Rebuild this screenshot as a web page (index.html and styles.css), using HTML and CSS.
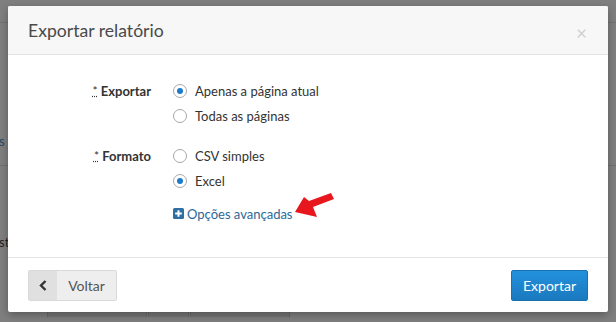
FILE: index.html
```html
<!DOCTYPE html>
<html lang="pt">
    <head>
        <meta charset="UTF-8">
        <title>Exportar relatório</title>
        <link rel="stylesheet" href="styles.css">
    </head>
    <body>
        <div class="page">
            <div class="topbar"></div>
            <div class="stub link">s</div>
            <div class="rule"></div>
            <div class="stub text">st</div>
            <div class="tabs">
                <span></span><span class="small"></span><span></span>
            </div>
        </div>

        <div class="overlay">
            <div class="modal">
                <div class="modal-header">
                    <h4>Exportar relatório</h4>
                    <span class="close">&times;</span>
                </div>
                <div class="modal-body">
                    <div class="group">
                        <label class="name"><abbr>*</abbr> Exportar</label>
                        <div class="options">
                            <label class="radio"><span class="dot checked"></span>Apenas a página atual</label>
                            <label class="radio"><span class="dot"></span>Todas as páginas</label>
                        </div>
                    </div>
                    <div class="group">
                        <label class="name"><abbr>*</abbr> Formato</label>
                        <div class="options">
                            <label class="radio"><span class="dot"></span>CSV simples</label>
                            <label class="radio"><span class="dot checked"></span>Excel</label>
                            <a class="advanced">
                                <svg width="11" height="11" viewBox="0 0 11 11">
                                    <rect width="11" height="11" rx="1.5" fill="#2f6fa3"/>
                                    <path d="M5.5 2.2v6.6M2.2 5.5h6.6" stroke="#fff" stroke-width="2"/>
                                </svg>Opções avançadas
                                <svg class="arrow" width="50" height="32" viewBox="0 0 50 32">
                                    <polygon points="5,24 14,9 19,13 41,5 44,11 23,19 27,29" fill="#e8171d"/>
                                </svg>
                            </a>
                        </div>
                    </div>
                </div>
                <div class="modal-footer">
                    <button class="back"><span class="chev">
                        <svg width="8" height="11" viewBox="0 0 8 11"><path d="M6.5 1L2 5.5 6.5 10" fill="none" stroke="#333" stroke-width="2.4"/></svg>
                    </span><span class="label">Voltar</span></button>
                    <button class="primary">Exportar</button>
                </div>
            </div>
        </div>
    </body>
</html>
```

FILE: styles.css
```css
body {
    margin: 0;
    background: #7f7f7f;
    font-family: Lato, "Open Sans", sans-serif;
    color: #333;
    height: 322px;
    overflow: hidden;
}

.page {
    width: 616px;
    height: 322px;
    position: relative;

    .topbar {
        height: 22px;
        border-bottom: 1px solid #707070;
    }

    .stub {
        font-size: 13px;
        margin-left: -1px;
    }

    .link {
        margin-top: 110px;
        color: #244a66;
    }

    .rule {
        margin-top: 16px;
        border-top: 1px solid #707070;
    }

    .text {
        margin-top: 68px;
        color: #222;
    }

    .tabs {
        display: flex;
        margin: 56px 0 0 47px;

        span {
            width: 98px;
            height: 10px;
            border: 1px solid #6a6a6a;
            border-bottom: none;
            background: #777;
            margin-right: 1px;
            border-radius: 2px 2px 0 0;
        }

        .small {
            width: 39px;
        }
    }
}

.overlay {
    position: absolute;
    top: 0;
    left: 0;
    right: 0;
    bottom: 0;
    padding: 6px 8px;
}

.modal {
    width: 600px;
    background: #fff;
    border-radius: 2px;
    box-shadow: 0 3px 9px rgba(0, 0, 0, 0.3);
    overflow: hidden;
}

.modal-header {
    display: flex;
    align-items: center;
    justify-content: space-between;
    height: 48px;
    padding: 0 20px;
    background: #f7f7f7;
    border-bottom: 1px solid #e2e2e2;

    h4 {
        margin: 0;
        font-size: 17.6px;
        font-weight: normal;
        color: #4a4a4a;
    }

    .close {
        font-size: 19px;
        color: #d0d0d0;
        margin-right: 1px;
        margin-top: 4px;
    }
}

.modal-body {
    padding: 23px 20px 31px;
    font-size: 13px;

    .group {
        display: grid;
        grid-template-columns: 123px 1fr;
        column-gap: 22px;
        margin-bottom: 15px;
    }

    .group:last-child {
        margin-bottom: 0;
    }

    .name {
        text-align: right;
        font-weight: bold;
        line-height: 25px;
        color: #333;

        abbr {
            font-weight: normal;
            font-size: 12px;
            text-decoration: underline dotted;
            vertical-align: 1px;
        }
    }

    .options {
        display: flex;
        flex-direction: column;
        align-items: flex-start;
    }

    .radio {
        display: flex;
        align-items: center;
        height: 25px;
        color: #333;

        .dot {
            box-sizing: border-box;
            width: 14px;
            height: 14px;
            border: 1px solid #a9a9a9;
            border-radius: 50%;
            margin-right: 8px;
            display: flex;
            align-items: center;
            justify-content: center;
        }

        .checked::after {
            content: "";
            width: 6px;
            height: 6px;
            border-radius: 50%;
            background: #1c7cc9;
        }
    }

    .advanced {
        position: relative;
        display: flex;
        align-items: center;
        gap: 3px;
        height: 25px;
        margin-top: 8px;
        color: #2c6898;

        .arrow {
            position: absolute;
            left: 117px;
            top: -13px;
        }
    }
}

.modal-footer {
    display: flex;
    justify-content: space-between;
    align-items: center;
    padding: 12px 20px 11px;
    border-top: 1px solid #e5e5e5;

    button {
        height: 31px;
        font-family: inherit;
        font-size: 14px;
        border-radius: 2px;
        padding: 0;
    }

    .back {
        display: flex;
        width: 89px;
        background: #eeeeee;
        border: 1px solid #d9d9d9;
        color: #555;

        .chev {
            display: flex;
            align-items: center;
            justify-content: center;
            width: 28px;
            height: 100%;
            background: #e0e0e0;
        }

        .label {
            flex: 1;
            line-height: 29px;
            text-align: center;
        }
    }

    .primary {
        width: 77px;
        background: linear-gradient(#2391dc, #1a79bf);
        border: 1px solid #1a6fae;
        color: #fff;
    }
}
```
